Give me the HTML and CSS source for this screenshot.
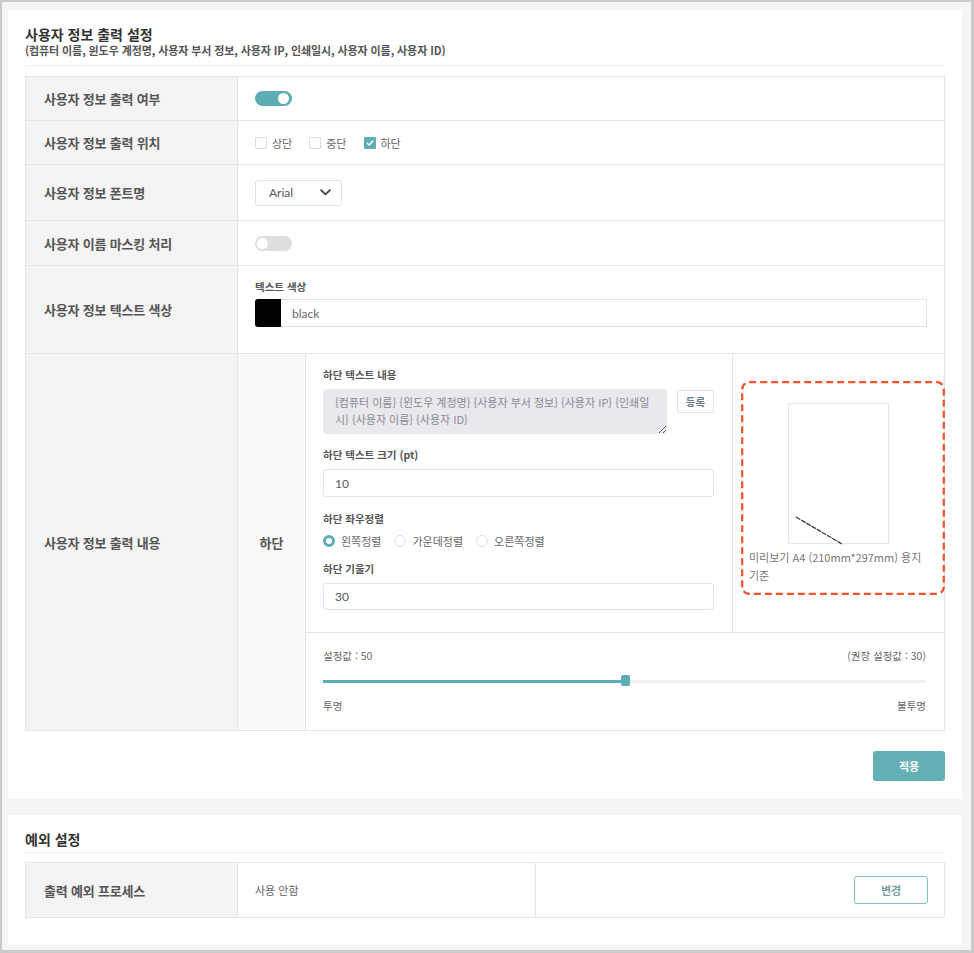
FILE: index.html
```html
<!DOCTYPE html>
<html lang="ko">
<head>
<meta charset="utf-8">
<title>사용자 정보 출력 설정</title>
<link rel="stylesheet" href="styles.css">
</head>
<body>
<div class="frame">
  <section class="card card-main">
    <header class="card-head">
      <h2 class="card-title">사용자 정보 출력 설정</h2>
      <p class="card-sub">(컴퓨터 이름, 윈도우 계정명, 사용자 부서 정보, 사용자 IP, 인쇄일시, 사용자 이름, 사용자 ID)</p>
    </header>

    <div class="tbl">
      <div class="row row-h43">
        <div class="th">사용자 정보 출력 여부</div>
        <div class="td"><span class="toggle on"><span class="knob"></span></span></div>
      </div>
      <div class="row row-h44">
        <div class="th">사용자 정보 출력 위치</div>
        <div class="td checks">
          <label class="chk"><span class="box"></span><span>상단</span></label>
          <label class="chk"><span class="box"></span><span>중단</span></label>
          <label class="chk"><span class="box checked"><svg width="8" height="8" viewBox="0 0 8 8"><polyline points="1.3,4.2 3.2,6 6.8,2" fill="none" stroke="#fff" stroke-width="1.5" stroke-linecap="round" stroke-linejoin="round"/></svg></span><span>하단</span></label>
        </div>
      </div>
      <div class="row row-h56">
        <div class="th">사용자 정보 폰트명</div>
        <div class="td">
          <div class="select"><span>Arial</span><svg width="11" height="7" viewBox="0 0 11 7"><polyline points="1.2,1.2 5.5,5.4 9.8,1.2" fill="none" stroke="#4a4a55" stroke-width="2" stroke-linecap="round" stroke-linejoin="round"/></svg></div>
        </div>
      </div>
      <div class="row row-h45">
        <div class="th">사용자 이름 마스킹 처리</div>
        <div class="td"><span class="toggle off"><span class="knob"></span></span></div>
      </div>
      <div class="row row-h88">
        <div class="th">사용자 정보 텍스트 색상</div>
        <div class="td td-color">
          <div class="flabel">텍스트 색상</div>
          <div class="color-field">
            <span class="swatch"></span>
            <span class="color-input">black</span>
          </div>
        </div>
      </div>
      <div class="row row-content">
        <div class="th">사용자 정보 출력 내용</div>
        <div class="td td-nested">
          <div class="sub-th">하단</div>
          <div class="nested">
            <div class="upper">
              <div class="form-col">
                <div class="fgroup">
                  <div class="flabel">하단 텍스트 내용</div>
                  <div class="text-row">
                    <textarea class="tarea" readonly>{컴퓨터 이름} {윈도우 계정명} {사용자 부서 정보} {사용자 IP} {인쇄일시} {사용자 이름} {사용자 ID}</textarea>
                    <button class="btn-reg" type="button">등록</button>
                  </div>
                </div>
                <div class="fgroup">
                  <div class="flabel">하단 텍스트 크기 (pt)</div>
                  <div class="input h28">10</div>
                </div>
                <div class="fgroup g15">
                  <div class="flabel">하단 좌우정렬</div>
                  <div class="radios">
                    <label class="rad"><span class="dot sel"></span><span>왼쪽정렬</span></label>
                    <label class="rad"><span class="dot"></span><span>가운데정렬</span></label>
                    <label class="rad"><span class="dot"></span><span>오른쪽정렬</span></label>
                  </div>
                </div>
                <div class="fgroup">
                  <div class="flabel">하단 기울기</div>
                  <div class="input h27">30</div>
                </div>
              </div>
              <div class="preview-col">
                <div class="paper">
                  <svg width="101" height="141" viewBox="0 0 101 141"><line x1="8" y1="114" x2="54" y2="141" stroke="#3a3a3a" stroke-width="1.3" stroke-dasharray="5 1"/></svg>
                </div>
                <p class="caption">미리보기 A4 (210mm*297mm) 용지 기준</p>
                <svg class="annot" width="204" height="214" viewBox="0 0 204 214"><rect x="1.2" y="1.2" width="201.6" height="211.6" rx="7" ry="7" fill="none" stroke="#f2502a" stroke-width="2.2" stroke-dasharray="7 4"/></svg>
              </div>
            </div>
            <div class="lower">
              <div class="srow"><span>설정값 : 50</span><span>(권장 설정값 : 30)</span></div>
              <div class="slider">
                <div class="track"></div>
                <span class="thumb"></span>
              </div>
              <div class="srow"><span>투명</span><span>불투명</span></div>
            </div>
          </div>
        </div>
      </div>
    </div>

    <div class="actions"><button class="btn-apply" type="button">적용</button></div>
  </section>

  <section class="card card-ex">
    <header class="card-head2">
      <h2 class="card-title">예외 설정</h2>
    </header>
    <div class="tbl">
      <div class="row row-h54">
        <div class="th">출력 예외 프로세스</div>
        <div class="td td-val">사용 안함</div>
        <div class="td td-btn"><button class="btn-line" type="button">변경</button></div>
      </div>
    </div>
  </section>
</div>
</body>
</html>
```

FILE: styles.css
```css
* { box-sizing: border-box; }
html, body { margin: 0; padding: 0; }
body {
  font-family: "Noto Sans CJK KR", "Noto Sans", "Liberation Sans", sans-serif;
  color: #555;
  background: #f4f5f7;
}
.frame {
  width: 974px;
  height: 953px;
  border: 2px solid #cbcbcb;
  border-right-width: 3px;
  border-bottom-width: 3px;
  background: #f4f5f7;
  padding: 8px 9px 0 6px;
}
.card {
  background: #fff;
}
.card-main { padding: 15px 17px 18px; }
.card-ex { margin-top: 16px; padding: 15px 17px 27px; }

.card-head {
  padding-bottom: 8px;
  border-bottom: 1px solid #eeeeee;
  margin-bottom: 10px;
}
.card-head2 {
  padding-bottom: 4px;
  border-bottom: 1px solid #eeeeee;
  margin-bottom: 9px;
}
.card-title {
  margin: 0;
  font-size: 14px;
  line-height: 18px;
  font-weight: 700;
  color: #333;
}
.card-sub {
  margin: 0;
  font-size: 11px;
  line-height: 14px;
  font-weight: 700;
  color: #555;
  letter-spacing: -0.1px;
}

.tbl { border: 1px solid #e5e5e5; }
.row { display: flex; }
.row + .row { border-top: 1px solid #e5e5e5; }
.row-h43 { height: 43px; }
.row-h44 { height: 44px; }
.row-h45 { height: 45px; }
.row-h56 { height: 56px; }
.row-h88 { height: 88px; }
.row-h54 { height: 54px; }
.row-content { height: 377px; }

.th {
  width: 212px;
  flex: none;
  background: #f4f4f4;
  border-right: 1px solid #e5e5e5;
  display: flex;
  align-items: center;
  padding-left: 18px;
  font-size: 13px;
  font-weight: 700;
  color: #555;
  letter-spacing: -0.2px;
}
.td {
  flex: 1;
  display: flex;
  align-items: center;
  padding: 0 17px;
  min-width: 0;
}

/* toggles */
.toggle {
  position: relative;
  width: 37px;
  height: 15px;
  border-radius: 8px;
  display: inline-block;
}
.toggle.on { background: #5cadb4; }
.toggle.off { background: #dedede; }
.toggle .knob {
  position: absolute;
  top: 2px;
  width: 11px;
  height: 11px;
  border-radius: 50%;
  background: #fff;
}
.toggle.on .knob { right: 3px; }
.toggle.off .knob { left: 2px; }

/* checkboxes */
.checks { gap: 17px; }
.chk {
  display: flex;
  align-items: center;
  gap: 5px;
  font-size: 11px;
  color: #666;
}
.box {
  width: 12px;
  height: 12px;
  border: 1px solid #dcdcdc;
  border-radius: 1px;
  display: flex;
  align-items: center;
  justify-content: center;
  background: #fff;
}
.box.checked { background: #5cadb4; border-color: #5cadb4; }

/* select */
.select {
  width: 87px;
  height: 26px;
  border: 1px solid #e3e3e3;
  border-radius: 3px;
  display: flex;
  align-items: center;
  justify-content: space-between;
  padding: 0 10px 0 13px;
  font-family: "Lato", "Noto Sans", sans-serif;
  font-size: 12px;
  color: #555566;
}

/* color row */
.td-color {
  flex-direction: column;
  align-items: stretch;
  justify-content: flex-start;
  padding-top: 14px;
}
.flabel {
  font-size: 10.5px;
  line-height: 14px;
  font-weight: 700;
  color: #555;
}
.color-field {
  margin-top: 5px;
  display: flex;
  height: 28px;
}
.swatch {
  width: 26px;
  flex: none;
  background: #000;
  border-radius: 3px 0 0 3px;
}
.color-input {
  flex: 1;
  border: 1px solid #e3e3e3;
  border-left: none;
  display: flex;
  align-items: center;
  padding-left: 11px;
  font-family: "Lato", "Noto Sans", sans-serif;
  font-size: 12px;
  color: #666677;
}

/* nested content row */
.td-nested {
  padding: 0;
  align-items: stretch;
}
.sub-th {
  width: 68px;
  flex: none;
  background: #f9f9f9;
  border-right: 1px solid #e5e5e5;
  display: flex;
  align-items: center;
  justify-content: center;
  font-size: 13px;
  font-weight: 700;
  color: #555;
}
.nested {
  flex: 1;
  display: flex;
  flex-direction: column;
  min-width: 0;
}
.upper {
  display: flex;
  height: 279px;
  border-bottom: 1px solid #e5e5e5;
}
.form-col {
  flex: 1;
  padding: 14px 18px 0 17px;
  display: flex;
  flex-direction: column;
  gap: 14px;
}
.fgroup {
  display: flex;
  flex-direction: column;
  gap: 7px;
}
.fgroup.g15 { margin-top: 1px; gap: 8px; }
.text-row {
  display: flex;
  gap: 10px;
  align-items: flex-start;
}
.tarea {
  flex: 1;
  height: 45px;
  margin: 0;
  background: #e8e8ed;
  border: none;
  border-radius: 4px;
  padding: 5px 12px;
  font-family: "Noto Sans CJK KR", "Noto Sans", sans-serif;
  font-size: 11px;
  line-height: 17px;
  color: #8a8a96;
  resize: both;
  overflow: hidden;
  outline: none;
}
.btn-reg {
  width: 37px;
  height: 23px;
  margin-top: 1px;
  padding: 0;
  border: 1px solid #e3e3e3;
  border-radius: 2px;
  background: #fff;
  font-family: "Noto Sans CJK KR", sans-serif;
  font-size: 10.5px;
  font-weight: 700;
  color: #6a7a88;
}
.input {
  border: 1px solid #e3e3e3;
  border-radius: 3px;
  display: flex;
  align-items: center;
  padding-left: 11px;
  font-family: "Lato", "Noto Sans", sans-serif;
  font-size: 12px;
  color: #555566;
}
.h28 { height: 28px; }
.h27 { height: 27px; }
.radios {
  display: flex;
  align-items: center;
  gap: 13px;
  height: 14px;
}
.rad {
  display: flex;
  align-items: center;
  gap: 6px;
  font-size: 11px;
  color: #666;
}
.dot {
  width: 12px;
  height: 12px;
  border-radius: 50%;
  border: 1px solid #dedede;
  background: #fff;
}
.dot.sel { border: 3px solid #5cadb4; }

.preview-col {
  position: relative;
  width: 212px;
  flex: none;
  border-left: 1px solid #e5e5e5;
  padding-top: 49px;
}
.paper {
  width: 101px;
  height: 141px;
  margin: 0 auto;
  border: 1px solid #e6e6e6;
  position: relative;
}
.paper svg { position: absolute; left: -1px; top: -1px; overflow: visible; }
.caption {
  margin: 4px 0 0;
  padding: 0 12px 0 16px;
  font-size: 11px;
  line-height: 18px;
  color: #777;
  word-break: keep-all;
}
.annot {
  position: absolute;
  left: 8px;
  top: 27px;
}

.lower {
  flex: 1;
  padding: 16px 18px 0 17px;
}
.srow {
  display: flex;
  justify-content: space-between;
  font-size: 10.5px;
  line-height: 14px;
  color: #666;
}
.slider {
  position: relative;
  height: 20px;
  margin: 8px 0;
  display: flex;
  align-items: center;
}
.track {
  width: 100%;
  height: 3px;
  background: linear-gradient(to right, #5cadb4 50%, #eeeeee 50%);
}
.thumb {
  position: absolute;
  left: calc(50% - 4px);
  top: 4px;
  width: 9px;
  height: 11px;
  border-radius: 2px;
  background: #5cadb4;
}

.actions {
  display: flex;
  justify-content: flex-end;
  margin-top: 20px;
}
.btn-apply {
  width: 72px;
  height: 30px;
  border: none;
  border-radius: 3px;
  background: #62afb6;
  color: #fff;
  font-family: "Noto Sans CJK KR", sans-serif;
  font-size: 11px;
  font-weight: 700;
}

.td-val {
  flex: none;
  width: 298px;
  border-right: 1px solid #e5e5e5;
  font-size: 11px;
  color: #666;
}
.td-btn { justify-content: flex-end; padding-right: 16px; }
.btn-line {
  width: 74px;
  height: 28px;
  border: 1px solid #7fc1c6;
  border-radius: 3px;
  background: #fff;
  font-family: "Noto Sans CJK KR", sans-serif;
  font-size: 11px;
  font-weight: 700;
  color: #7a9da2;
}
```
